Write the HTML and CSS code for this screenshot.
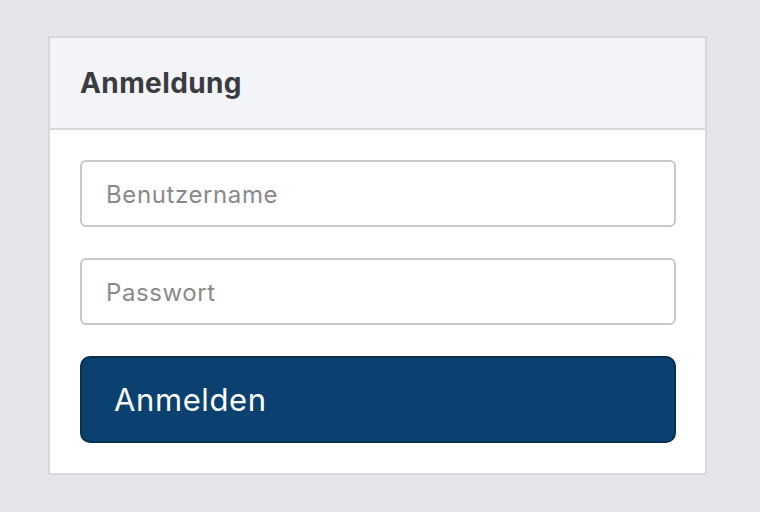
FILE: index.html
```html
<!DOCTYPE html>
<html lang="de">
<head>
<meta charset="utf-8">
<link rel="stylesheet" href="styles.css">
</head>
<body>
<div class="card">
  <div class="card-header">Anmeldung</div>
  <form class="card-body">
    <input class="field" type="text" placeholder="Benutzername">
    <input class="field" type="password" placeholder="Passwort">
    <button class="btn" type="button">Anmelden</button>
  </form>
</div>
</body>
</html>
```
FILE: styles.css
```css
html, body {
  margin: 0;
  padding: 0;
  background: #e4e6ea;
  font-family: Inter, "Liberation Sans", Arial, sans-serif;
}
body {
  padding: 36px 0 0 48px;
}
.card {
  width: 659px;
  box-sizing: border-box;
  background: #ffffff;
  border: 2px solid #d8d9dc;
}
.card-header {
  height: 92px;
  box-sizing: border-box;
  background: #f3f4f8;
  border-bottom: 2px solid #d8d9dc;
  padding: 0 30px;
  display: flex;
  align-items: center;
  font-size: 28px;
  font-weight: bold;
  letter-spacing: 0.4px;
  color: #3a3b40;
}
.card-body {
  margin: 0;
  padding: 30px 29px 30px 30px;
  display: flex;
  flex-direction: column;
  gap: 31px;
}
.field {
  height: 67px;
  box-sizing: border-box;
  border: 2px solid #c9c9c9;
  border-radius: 6px;
  padding: 2px 24px 0;
  font-family: Inter, "Liberation Sans", Arial, sans-serif;
  font-size: 24px;
  letter-spacing: 0.6px;
  color: #333;
  background: #fff;
  outline: none;
}
.field::placeholder {
  color: #8a8a8a;
}
.btn {
  height: 87px;
  box-sizing: border-box;
  background: #0a4170;
  border: 2px solid #062f52;
  border-radius: 10px;
  color: #ffffff;
  font-family: Inter, "Liberation Sans", Arial, sans-serif;
  font-size: 31px;
  letter-spacing: 0.6px;
  text-align: left;
  padding: 0 32px;
}
```
